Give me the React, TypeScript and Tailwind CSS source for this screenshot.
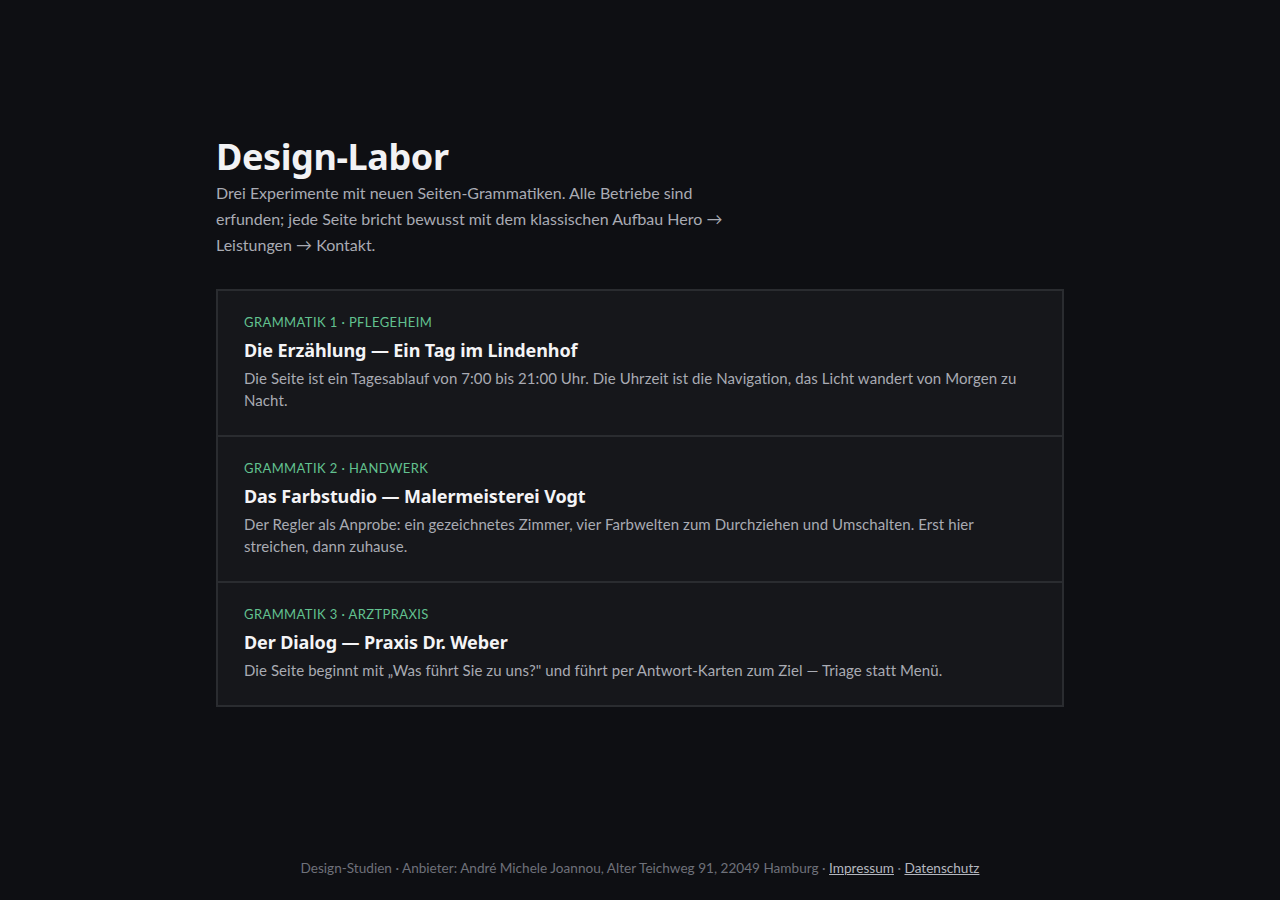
const experiments = [
  {
    label: 'Grammatik 1 · Pflegeheim',
    title: 'Die Erzählung — Ein Tag im Lindenhof',
    text: 'Die Seite ist ein Tagesablauf von 7:00 bis 21:00 Uhr. Die Uhrzeit ist die Navigation, das Licht wandert von Morgen zu Nacht.',
  },
  {
    label: 'Grammatik 2 · Handwerk',
    title: 'Das Farbstudio — Malermeisterei Vogt',
    text: 'Der Regler als Anprobe: ein gezeichnetes Zimmer, vier Farbwelten zum Durchziehen und Umschalten. Erst hier streichen, dann zuhause.',
  },
  {
    label: 'Grammatik 3 · Arztpraxis',
    title: 'Der Dialog — Praxis Dr. Weber',
    text: 'Die Seite beginnt mit „Was führt Sie zu uns?" und führt per Antwort-Karten zum Ziel — Triage statt Menü.',
  },
];

const heading = "font-['Noto_Sans',sans-serif]";

export default function App() {
  return (
    <div className="min-h-screen flex flex-col bg-[#0e0f13] text-[#e8e9ec] font-['Lato','Noto_Sans',sans-serif]">
      <main className="flex-1 w-full max-w-[848px] mx-auto pt-[134px]">
        <h1 className={`${heading} text-[36px] leading-[46px] font-bold tracking-[-0.4px] text-[#f2f2f4]`}>
          Design-Labor
        </h1>
        <p className="max-w-[530px] text-[16px] leading-[26px] text-[#a9abb3]">
          Drei Experimente mit neuen Seiten-Grammatiken. Alle Betriebe sind erfunden; jede Seite bricht bewusst mit dem
          klassischen Aufbau Hero → Leistungen → Kontakt.
        </p>

        <ul className="mt-[31px] border-2 border-[#2a2c30] bg-[#16171b]">
          {experiments.map((e, i) => (
            <li
              key={e.label}
              className={`px-[26px] pt-[22px] pb-[24px] ${i > 0 ? 'border-t-2 border-[#2a2c30]' : ''}`}
            >
              <div className="text-[13px] leading-[18px] uppercase tracking-[0.4px] text-[#62c190]">{e.label}</div>
              <h2 className={`${heading} mt-[7px] text-[18px] leading-[24px] font-bold tracking-[-0.1px] text-[#f4f4f6]`}>
                {e.title}
              </h2>
              <p className="mt-[5px] text-[15px] leading-[22px] tracking-[0.08px] text-[#a9abb3]">{e.text}</p>
            </li>
          ))}
        </ul>
      </main>

      <footer className="pb-[22px] text-center text-[13.6px] leading-[20px] text-[#6e717a]">
        Design-Studien · Anbieter: André Michele Joannou, Alter Teichweg 91, 22049 Hamburg ·{' '}
        <a href="#" className="underline text-[#b4b7bf]">Impressum</a> ·{' '}
        <a href="#" className="underline text-[#b4b7bf]">Datenschutz</a>
      </footer>
    </div>
  );
}
